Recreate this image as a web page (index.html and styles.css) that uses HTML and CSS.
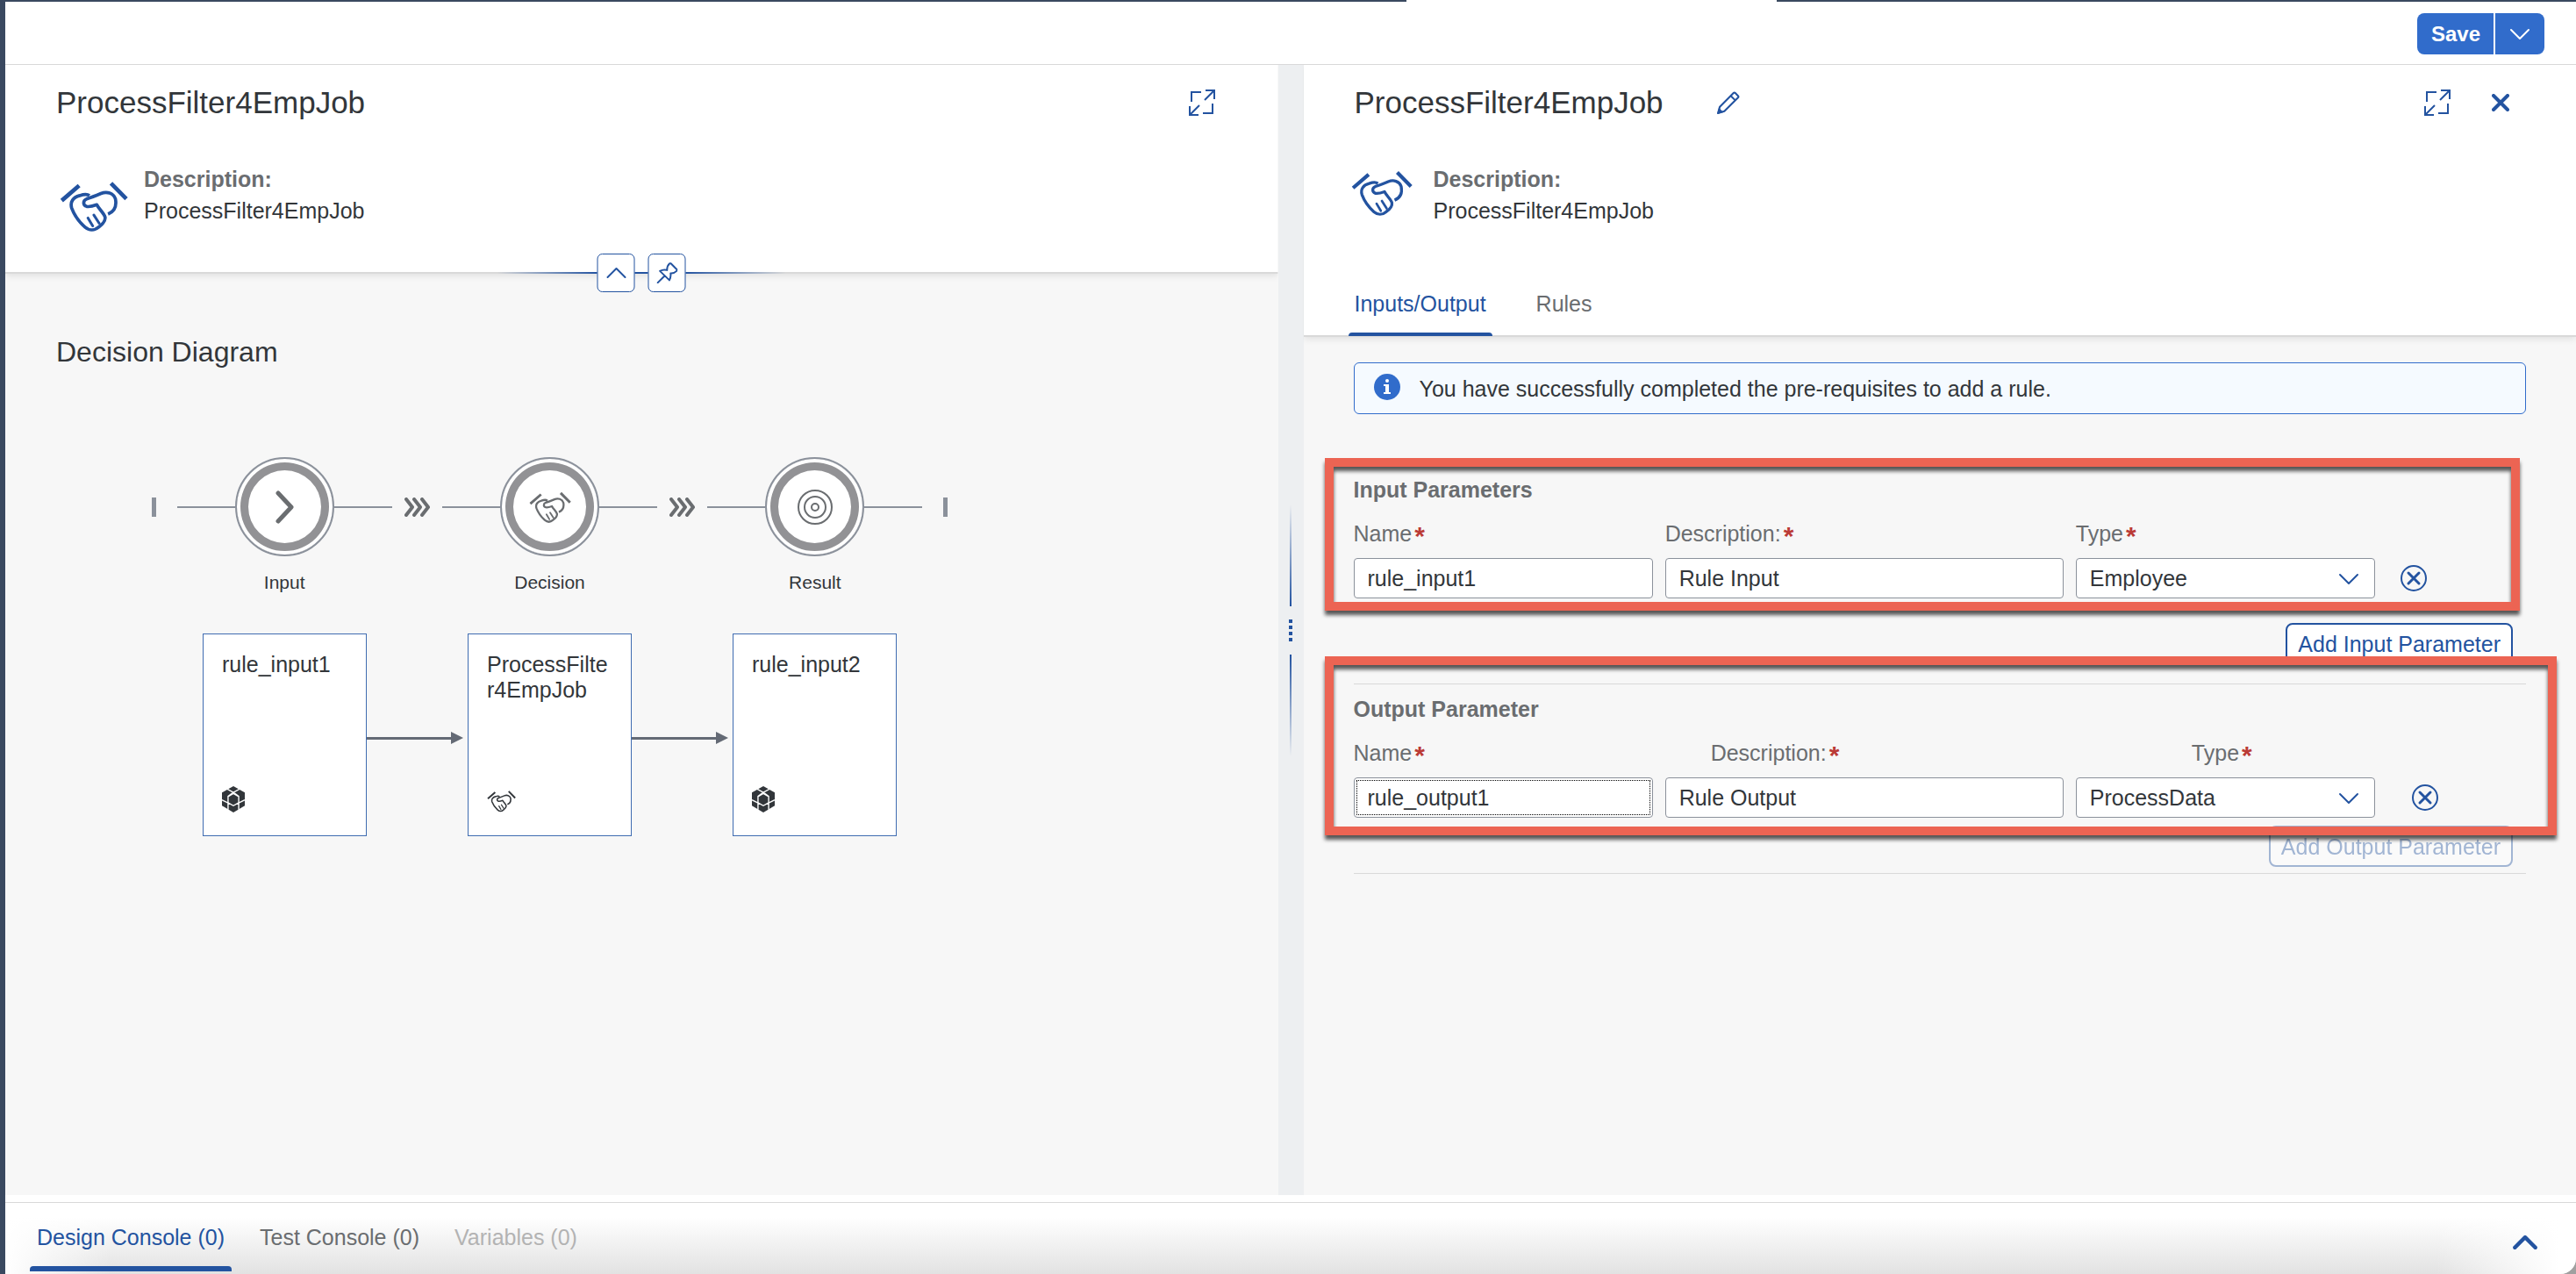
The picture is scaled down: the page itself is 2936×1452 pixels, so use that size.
FILE: index.html
```html
<!DOCTYPE html>
<html lang="en">
<head>
<meta charset="utf-8">
<title>ProcessFilter4EmpJob</title>
<link rel="stylesheet" href="styles.css">
</head>
<body>
<svg class="sprite" aria-hidden="true">
  <symbol id="handshake" viewBox="26 38 232 170">
    <g fill="none" stroke="currentColor">
      <path stroke-width="14" d="M33 104L92 53M200 45L252 98"/>
      <path stroke-width="11" stroke-linejoin="round" d="M127 87C118 80 106 83 94 87C72 93 60 108 67 130C76 154 94 178 112 194C126 206 144 206 158 194C172 184 182 174 180 160C176 146 160 134 152 118C138 123 128 126 118 124C104 120 104 104 118 98C136 93 150 87 166 80C186 72 208 78 215 98C220 124 210 142 190 150"/>
      <path stroke-width="9" stroke-linecap="round" d="M122 163L138 190M142 153L160 181"/>
    </g>
  </symbol>
  <symbol id="cube" viewBox="27 37 75 86">
    <path fill="currentColor" d="M64.500 37L102 58V101L64.500 123L27 101V58Z"/>
    <path fill="none" stroke="#fff" stroke-width="4" d="M64.500 61L82 71V91L64.500 101L47 91V71ZM64.500 61V57M64.500 57L38 43M64.500 57L91 43M64.500 57L46 71M64.500 57L83 71M27 82L47 92M102 82L82 92M47 92V114M82 92V114"/>
  </symbol>
  <symbol id="expand" viewBox="0 0 30 30">
    <path fill="none" stroke="currentColor" stroke-width="2" d="M14 3H3V14M16 27H27V16M19 1H29V11M29 1L18 12M11 29H1V19M1 29L12 18"/>
  </symbol>
  <symbol id="chevron" viewBox="0 0 24 14">
    <path fill="none" stroke="currentColor" stroke-width="2" stroke-linecap="round" stroke-linejoin="round" d="M2 2L12 12L22 2"/>
  </symbol>
  <symbol id="decline" viewBox="0 0 30 30">
    <circle cx="15" cy="15" r="14" fill="none" stroke="currentColor" stroke-width="2"/>
    <path fill="none" stroke="currentColor" stroke-width="3" stroke-linecap="round" d="M9 9L21 21M21 9L9 21"/>
  </symbol>
  <symbol id="flow" viewBox="0 0 29 22">
    <path fill="none" stroke="currentColor" stroke-width="4" stroke-linecap="round" stroke-linejoin="round" d="M2 2L9 11L2 20M11 2L18 11L11 20M20 2L27 11L20 20"/>
  </symbol>
</svg>

<div class="app">
  <header class="toolbar">
    <div class="split-button">
      <button class="save" type="button">Save</button>
      <button class="save-menu" type="button" aria-label="More save options"><svg class="ico-chevron"><use href="#chevron"/></svg></button>
    </div>
  </header>

  <div class="panes">
    <section class="pane">
      <div class="pane-head overview-head">
        <div class="title-row">
          <h1 class="title">ProcessFilter4EmpJob</h1>
          <button class="icon-btn left-expand" type="button" aria-label="Full screen"><svg class="ico-30"><use href="#expand"/></svg></button>
        </div>
        <div class="summary">
          <svg class="summary-icon large"><use href="#handshake"/></svg>
          <dl class="facts"><dt>Description:</dt><dd>ProcessFilter4EmpJob</dd></dl>
        </div>
        <div class="head-actions">
          <button class="head-btn" type="button" aria-label="Collapse header"><svg class="ico-chevron flip"><use href="#chevron"/></svg></button>
          <span class="head-link"></span>
          <button class="head-btn" type="button" aria-label="Pin header"><svg class="ico-pin" viewBox="264 51 73 73"><path fill="none" stroke="currentColor" stroke-width="6" stroke-linecap="round" stroke-linejoin="round" d="M267 122L291 98M275 81Q288 74 300 78Q299 64 309 55L313 55L334 76L333 81Q324 90 312 89Q314 102 308 113Z"/></svg></button>
        </div>
      </div>
      <div class="overview-body">
        <h2 class="subtitle">Decision Diagram</h2>
        <div class="diagram">
          <div class="track">
            <span class="stop"></span>
            <span class="rail"></span>
            <span class="station"><svg class="ico-next" viewBox="0 0 22 38"><path fill="none" stroke="currentColor" stroke-width="5" stroke-linecap="round" stroke-linejoin="round" d="M3 3L18 19L3 35"/></svg></span>
            <span class="rail"></span>
            <svg class="flow"><use href="#flow"/></svg>
            <span class="rail"></span>
            <span class="station"><svg class="ico-shake"><use href="#handshake"/></svg></span>
            <span class="rail"></span>
            <svg class="flow"><use href="#flow"/></svg>
            <span class="rail"></span>
            <span class="station"><svg class="ico-target" viewBox="0 0 40 40"><g fill="none" stroke="currentColor" stroke-width="2"><circle cx="20" cy="20" r="19"/><circle cx="20" cy="20" r="12"/><circle cx="20" cy="20" r="4"/></g></svg></span>
            <span class="rail"></span>
            <span class="stop"></span>
          </div>
          <div class="captions"><span>Input</span><span>Decision</span><span>Result</span></div>
          <div class="nodes">
            <article class="node"><p>rule_input1</p><svg class="ico-cube"><use href="#cube"/></svg></article>
            <span class="arrow"></span>
            <article class="node"><p>ProcessFilter4EmpJob</p><svg class="ico-deal"><use href="#handshake"/></svg></article>
            <span class="arrow"></span>
            <article class="node"><p>rule_input2</p><svg class="ico-cube"><use href="#cube"/></svg></article>
          </div>
        </div>
      </div>
    </section>

    <div class="splitter" role="separator" aria-orientation="vertical">
      <span class="grip-line up"></span>
      <span class="grip"></span>
      <span class="grip-line down"></span>
    </div>

    <section class="pane">
      <div class="pane-head detail-head">
        <div class="title-row">
          <h1 class="title">ProcessFilter4EmpJob</h1>
          <button class="icon-btn edit" type="button" aria-label="Edit"><svg class="ico-pencil" viewBox="0 0 26 26"><path fill="none" stroke="currentColor" stroke-width="2" stroke-linejoin="round" d="M2 24L4 17L19 2Q20 1 21 2L24 5Q25 6 24 7L9 22ZM16 5L21 10"/><path fill="currentColor" d="M1 25L3 18L8 23Z"/></svg></button>
          <span class="spacer"></span>
          <button class="icon-btn" type="button" aria-label="Full screen"><svg class="ico-30"><use href="#expand"/></svg></button>
          <button class="icon-btn close" type="button" aria-label="Close"><svg class="ico-close" viewBox="0 0 20 20"><path fill="none" stroke="currentColor" stroke-width="4" stroke-linecap="round" d="M2 2L18 18M18 2L2 18"/></svg></button>
        </div>
        <div class="summary">
          <svg class="summary-icon"><use href="#handshake"/></svg>
          <dl class="facts"><dt>Description:</dt><dd>ProcessFilter4EmpJob</dd></dl>
        </div>
        <nav class="tabs">
          <a class="tab active" href="#io">Inputs/Output</a>
          <a class="tab" href="#rules">Rules</a>
        </nav>
      </div>
      <div class="detail-body" id="io">
        <div class="message" role="status">
          <svg class="ico-30 info" viewBox="0 0 30 30"><circle cx="15" cy="15" r="15" fill="currentColor"/><path fill="#fff" d="M11 12H17V21H19V23H11V21H13V14H11Z"/><circle cx="15" cy="8" r="2" fill="#fff"/></svg>
          <span>You have successfully completed the pre-requisites to add a rule.</span>
        </div>

        <form class="params inputs">
          <span class="mark"></span>
          <h3>Input Parameters</h3>
          <div class="labels">
            <label for="in-name">Name<b>*</b></label>
            <label for="in-desc">Description:<b>*</b></label>
            <label for="in-type">Type<b>*</b></label>
          </div>
          <div class="fields">
            <input id="in-name" type="text" value="rule_input1">
            <input id="in-desc" type="text" value="Rule Input">
            <span class="select"><select id="in-type"><option>Employee</option></select><svg class="ico-chevron"><use href="#chevron"/></svg></span>
            <button class="icon-btn" type="button" aria-label="Remove input"><svg class="ico-30"><use href="#decline"/></svg></button>
          </div>
          <button class="add" type="button">Add Input Parameter</button>
        </form>

        <form class="params outputs">
          <span class="mark"></span>
          <h3>Output Parameter</h3>
          <div class="labels">
            <label for="out-name">Name<b>*</b></label>
            <label for="out-desc">Description:<b>*</b></label>
            <label for="out-type">Type<b>*</b></label>
          </div>
          <div class="fields">
            <span class="focused"><input id="out-name" type="text" value="rule_output1"></span>
            <input id="out-desc" type="text" value="Rule Output">
            <span class="select"><select id="out-type"><option>ProcessData</option></select><svg class="ico-chevron"><use href="#chevron"/></svg></span>
            <button class="icon-btn" type="button" aria-label="Remove output"><svg class="ico-30"><use href="#decline"/></svg></button>
          </div>
          <button class="add" type="button" disabled>Add Output Parameter</button>
        </form>
      </div>
    </section>
  </div>

  <footer class="console">
    <nav class="console-tabs">
      <a class="tab active" href="#design">Design Console (0)</a>
      <a class="tab" href="#test">Test Console (0)</a>
      <a class="tab disabled" href="#variables" aria-disabled="true">Variables (0)</a>
    </nav>
    <button class="icon-btn console-open" type="button" aria-label="Open console"><svg class="ico-up" viewBox="0 0 26 15"><path fill="none" stroke="currentColor" stroke-width="4" stroke-linecap="round" stroke-linejoin="round" d="M2 13L13 2L24 13"/></svg></button>
  </footer>
</div>
</body>
</html>
```
FILE: styles.css
```css
* { box-sizing: border-box; }

:root {
  --text: #32363a;
  --label: #6a6d70;
  --blue: #2353a0;
  --accent: #316ccb;
  --line: #d9d9d9;
  --shell: #3a4960;
  --track: #8b919b;
  --page: #f7f7f7;
}

body {
  margin: 0;
  background: #a0a0a0;
  color: var(--text);
  font: 25px/36px "Liberation Sans", Arial, sans-serif;
}

h1, h2, h3, p, dl, dd { margin: 0; font-weight: 400; }
a { color: inherit; text-decoration: none; }
button, input, select { font: inherit; color: inherit; margin: 0; }
svg { display: block; flex: none; }

.sprite { position: absolute; width: 0; height: 0; }

.app {
  min-height: 100vh;
  display: flex;
  flex-direction: column;
  border-left: 6px solid var(--shell);
}

/* toolbar */
.toolbar {
  display: flex;
  justify-content: flex-end;
  padding: 13px 36px 11px;
  border-top: 2px solid transparent;
  border-bottom: 1px solid var(--line);
  background:
    linear-gradient(#fff, #fff) padding-box,
    linear-gradient(90deg, var(--shell) 1597px, #fff 1597px, #fff 2019px, var(--shell) 2019px) border-box;
}
.split-button { display: flex; gap: 2px; }
.split-button button {
  height: 47px;
  padding: 0 16px;
  border: 0;
  background: var(--accent);
  color: #fff;
  font-weight: 700;
}
.split-button .save { width: 87px; border-radius: 8px 0 0 8px; font-size: 24px; }
.split-button .save-menu { border-radius: 0 8px 8px 0; }

/* icons */
.icon-btn {
  display: flex;
  padding: 0;
  border: 0;
  background: none;
  color: var(--blue);
}
.ico-30 { width: 30px; height: 30px; }
.ico-chevron { width: 24px; height: 14px; }
.ico-pencil { width: 27px; height: 27px; }
.ico-close { width: 20px; height: 20px; }
.ico-pin { width: 24px; height: 24px; }
.ico-next { width: 22px; height: 38px; }
.ico-shake { width: 48px; height: 36px; }
.ico-target { width: 40px; height: 40px; }
.ico-cube { width: 26px; height: 30px; }
.ico-deal { width: 33px; height: 26px; }
.ico-up { width: 28px; height: 16px; }
.flip { transform: rotate(180deg); }

/* panes */
.panes {
  flex: 1;
  display: grid;
  grid-template-columns: 1fr 29px 1fr;
  border-bottom: 8px solid #fff;
}
.pane { display: flex; flex-direction: column; background: var(--page); }
.pane-head {
  position: relative;
  background: #fff;
  border-bottom: 2px solid var(--line);
  box-shadow: 0 2px 8px rgba(0, 0, 0, .1);
  padding: 22px 58px 0;
  clip-path: inset(0 0 -30px 0);
}
.title-row { display: flex; align-items: center; height: 42px; }
.title { font-size: 35px; line-height: 42px; }
.left-expand { margin: 0 14px 0 auto; }
.edit { margin-left: 60px; }
.spacer { flex: 1; }
.close { margin: 0 18px 0 47px; }

.summary { display: flex; margin-top: 48px; padding-left: 4px; height: 72px; }
.summary-icon { width: 70px; height: 52px; color: var(--blue); margin: 8px 24px 0 -8px; }
.summary-icon.large { width: 78px; height: 58px; margin: 20px 18px 0 0; }
.facts dt { font-weight: 700; color: var(--label); }

.overview-head { padding-bottom: 52px; }
.head-actions {
  position: absolute;
  left: 50%;
  bottom: -23px;
  display: flex;
  align-items: center;
  transform: translateX(-50%);
}
.head-actions::before, .head-actions::after {
  content: "";
  width: 114px;
  height: 2px;
  background: linear-gradient(90deg, transparent, var(--blue));
}
.head-actions::after { background: linear-gradient(270deg, transparent, var(--blue)); }
.head-link { width: 15px; height: 2px; background: var(--blue); }
.head-btn {
  display: flex;
  align-items: center;
  justify-content: center;
  width: 43px;
  height: 44px;
  padding: 0;
  background: #fff;
  border: 1px solid var(--blue);
  border-radius: 6px;
  color: var(--blue);
}

/* decision diagram */
.overview-body { padding: 70px 58px; }
.subtitle { font-size: 32px; line-height: 38px; }
.diagram { width: 907px; margin: 101px 0 0 109px; }
.track { display: flex; align-items: center; justify-content: space-between; color: var(--label); }
.stop { width: 5px; height: 22px; background: var(--track); }
.stop:first-child { margin-right: 24px; }
.stop:last-child { margin-left: 24px; }
.rail { flex: 1; height: 2px; background: var(--track); }
.flow { width: 29px; height: 22px; margin: 0 14px; }
.station {
  display: flex;
  align-items: center;
  justify-content: center;
  width: 113px;
  height: 113px;
  border: 2px solid var(--track);
  border-radius: 50%;
  background: #fff;
  box-shadow: inset 0 0 0 4px #fff, inset 0 0 0 13px #929295;
}
.captions {
  display: grid;
  grid-template-columns: repeat(3, 1fr);
  margin-top: 16px;
  text-align: center;
  font-size: 21px;
  line-height: 28px;
}
.nodes { display: flex; margin: 44px 58px 0; }
.node {
  width: 187px;
  height: 231px;
  padding: 20px 21px 26px;
  border: 1px solid #3f6cb1;
  background: #fff;
  display: flex;
  flex-direction: column;
  justify-content: space-between;
  line-height: 29px;
}
.node p { word-break: break-all; }
.arrow { flex: 1; display: flex; align-items: center; margin-right: 5px; padding-top: 7px; }
.arrow::before { content: ""; flex: 1; height: 3px; background: #646a75; }
.arrow::after {
  content: "";
  border-left: 14px solid #646a75;
  border-top: 7px solid transparent;
  border-bottom: 7px solid transparent;
}

/* splitter */
.splitter {
  display: flex;
  flex-direction: column;
  align-items: center;
  justify-content: center;
  background: #edeff1;
}
.grip-line { width: 2px; height: 116px; }
.grip-line.up { background: linear-gradient(transparent, var(--blue)); }
.grip-line.down { background: linear-gradient(var(--blue), transparent); }
.grip {
  width: 4px;
  height: 25px;
  margin: 15px 0;
  background: repeating-linear-gradient(var(--blue) 0 4px, transparent 4px 7px);
}

/* details */
.tabs { display: flex; gap: 43px; margin: 70px -6px -1px -7px; }
.tab { padding: 0 7px 19px; color: var(--label); position: relative; }
.tab.active { color: var(--blue); }
.tab.active::after {
  content: "";
  position: absolute;
  left: 0;
  right: 0;
  bottom: 0;
  height: 4px;
  border-radius: 4px 4px 0 0;
  background: var(--blue);
}
.detail-body { padding: 29px 57px; }
.message {
  display: flex;
  align-items: center;
  height: 59px;
  padding: 0 22px;
  gap: 22px;
  border: 1px solid var(--accent);
  border-radius: 6px;
  background: #f5faff;
}
.info { color: var(--accent); margin-bottom: 4px; }

.params {
  position: relative;
  display: flex;
  flex-direction: column;
  border-bottom: 1px solid var(--line);
}
.params h3 { font-size: 25px; font-weight: 700; color: var(--label); }
.inputs { padding: 68px 0 22px; }
.outputs { padding: 10px 0 7px; }
.labels, .fields { display: grid; grid-template-columns: 341fr 454fr 341fr 158fr; column-gap: 14px; }
.labels { margin: 14px 0 10px; color: var(--label); }
.outputs .labels { grid-template-columns: 407fr 548fr 381fr; column-gap: 0; }
.labels b { color: #bb3b36; padding-left: 3px; font-size: 30px; line-height: 0; vertical-align: -4px; }
.fields { align-items: center; }
.fields input, .fields select {
  display: block;
  width: 100%;
  height: 46px;
  padding: 0 15px;
  border: 1px solid var(--track);
  border-radius: 4px;
  background: #fff;
  appearance: none;
  line-height: 36px;
}
.focused, .select { position: relative; }
.focused::after {
  content: "";
  position: absolute;
  inset: 3px;
  border: 1px dotted #000;
  pointer-events: none;
}
.select .ico-chevron { position: absolute; right: 18px; top: 17px; color: var(--blue); pointer-events: none; }
.fields .icon-btn { padding-left: 15px; }
.outputs .icon-btn { padding-left: 28px; }
.add {
  align-self: flex-end;
  height: 47px;
  padding: 0 12px;
  margin: 28px 15px 0;
  border: 2px solid var(--blue);
  border-radius: 8px;
  background: #fff;
  color: var(--blue);
}
.outputs .add { margin-top: 9px; }
.add:disabled { opacity: .4; }

/* highlight frames over the parameter groups */
.mark {
  position: absolute;
  z-index: 1;
  border: 10px solid #ec6453;
  filter: drop-shadow(0 5px 2px rgba(0, 0, 0, .65));
  pointer-events: none;
}
.inputs .mark { inset: 50px 7px 83px -33px; }
.outputs .mark { inset: -32px -35px 43px -33px; }

/* console */
.console {
  display: flex;
  justify-content: space-between;
  align-items: flex-start;
  padding: 21px 44px 3px 28px;
  border-top: 1px solid var(--line);
  border-radius: 0 0 18px 0;
  background:
    linear-gradient(90deg, #fff, transparent 120px, transparent calc(100% - 160px), #fff calc(100% - 20px)),
    linear-gradient(#fff 20%, #e2e2e2);
}
.console-tabs { display: flex; gap: 24px; }
.console .tab { padding: 0 8px 21px; }
.console .tab.active::after { height: 6px; }
.console .tab.disabled { color: #b3b3b3; }
.console-open { margin-top: 16px; }
```
